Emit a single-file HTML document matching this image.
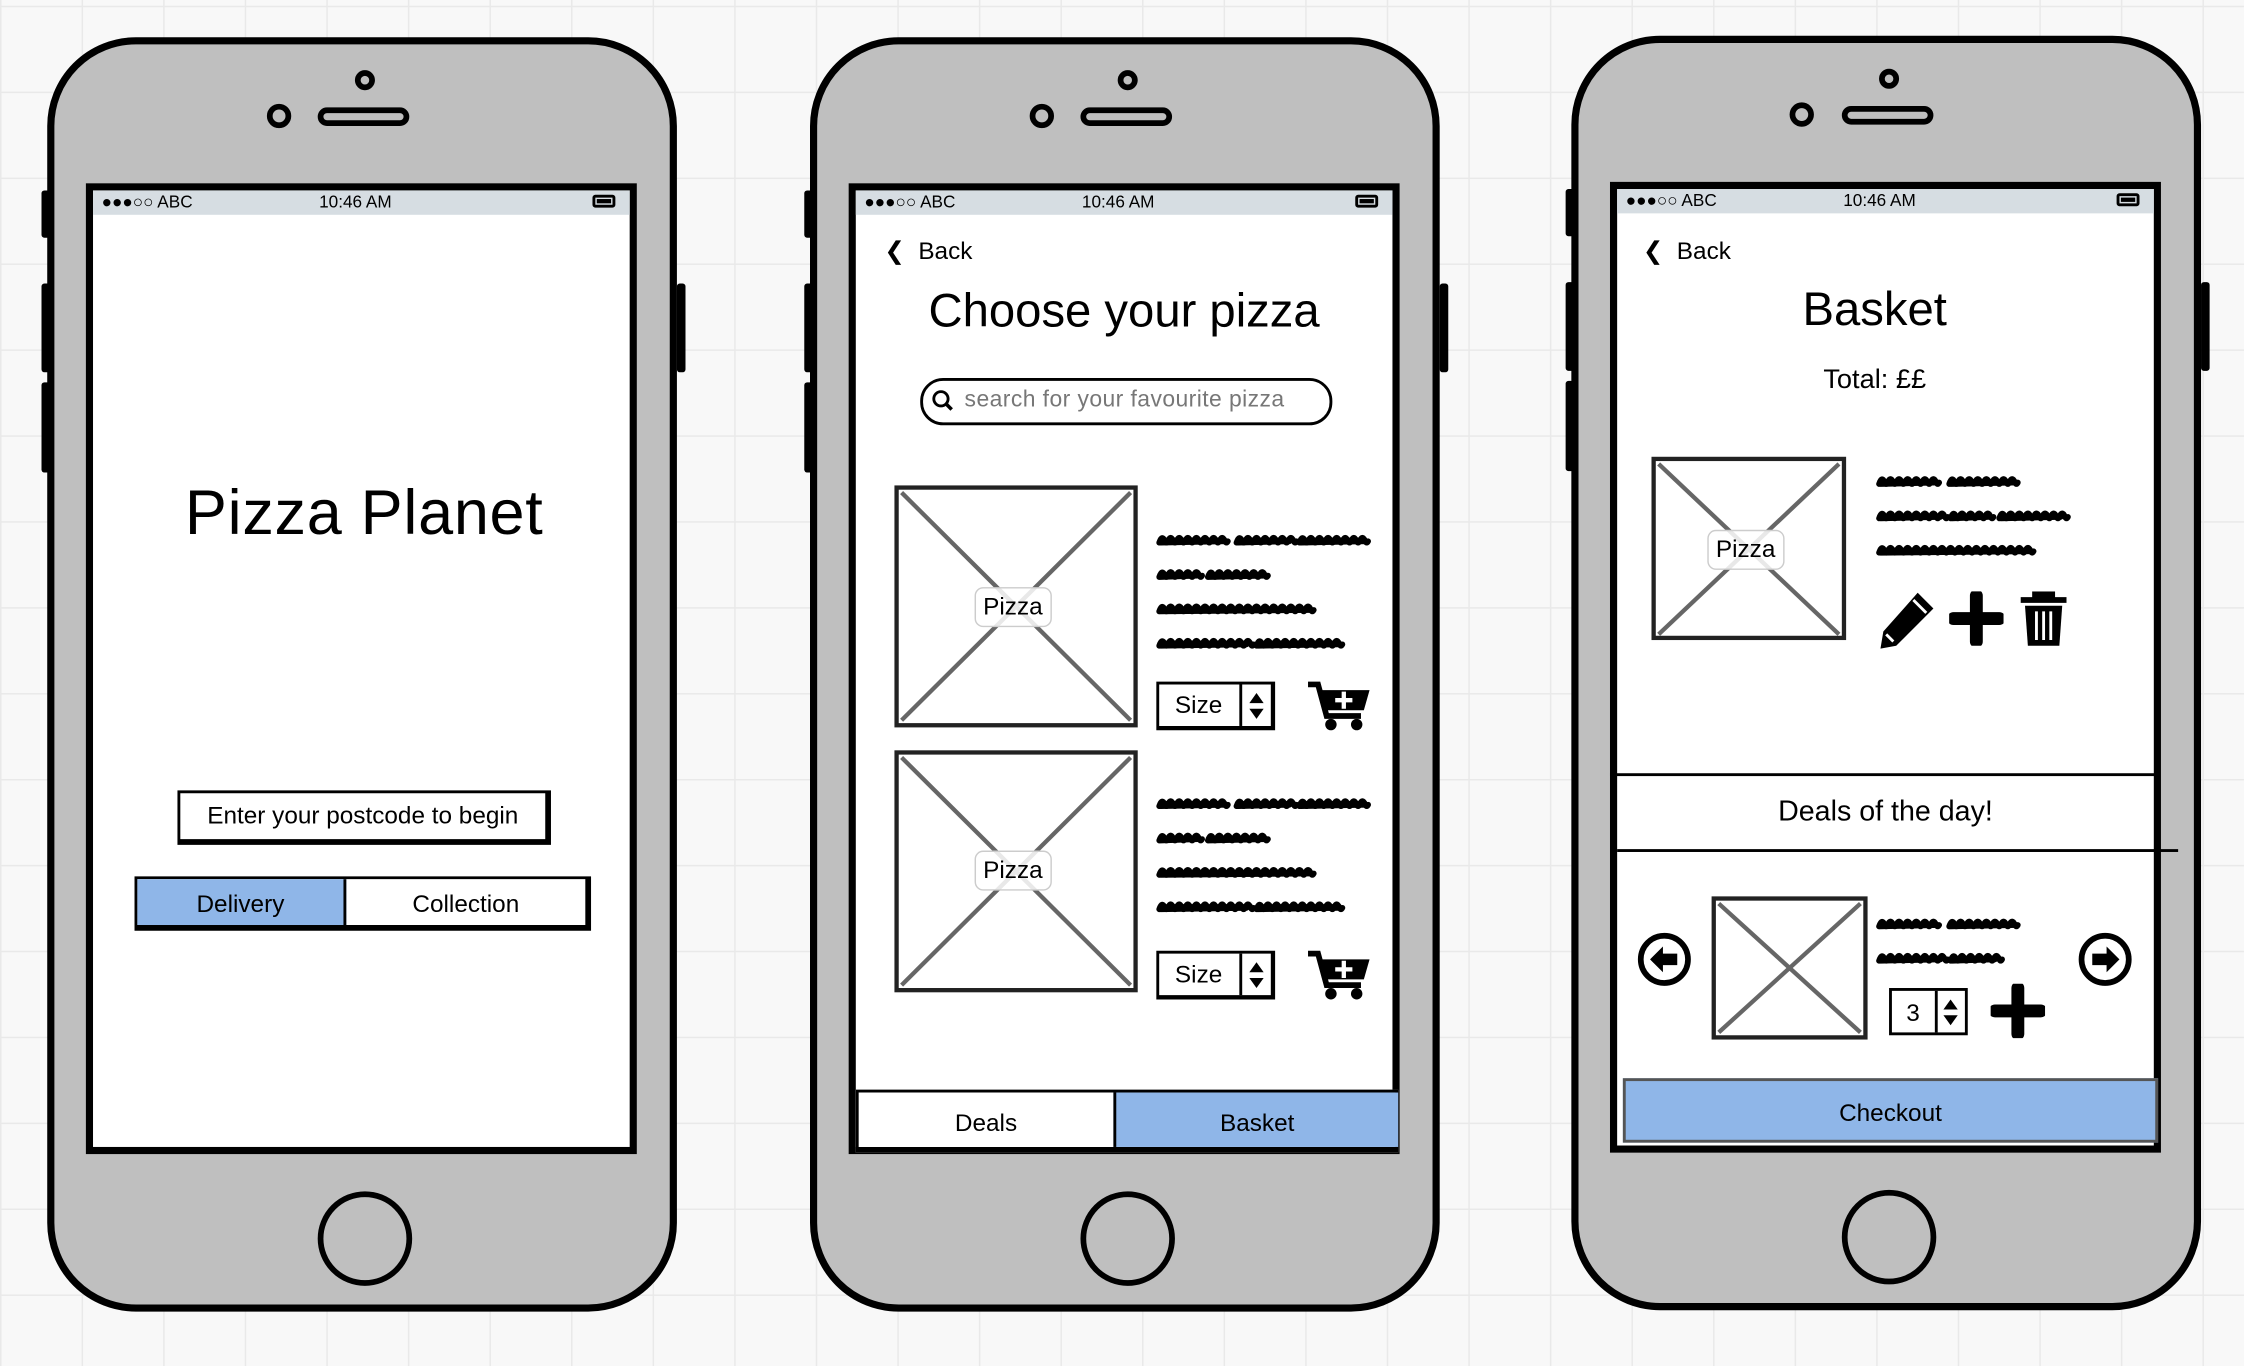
<!DOCTYPE html>
<html><head><meta charset="utf-8">
<style>
html,body{margin:0;padding:0}
body{width:2244px;height:1366px;overflow:hidden;background:#f8f8f8}
#w{position:absolute;left:0;top:0;width:1568px;height:954px;transform:scale(1.4311,1.4319);transform-origin:0 0;
background-color:#f8f8f8;
background-image:linear-gradient(#e9e9e9 1px,transparent 1px),linear-gradient(90deg,#e9e9e9 1px,transparent 1px);
background-size:57px 60px;background-position:0 4px;
font-family:"Liberation Sans",sans-serif;color:#000}
.a{position:absolute}
.phone{position:absolute;width:430px;height:880px;border:5px solid #000;border-radius:62px;background:#bfbfbf}
.scr{position:absolute;left:22px;top:97px;width:375px;height:668px;border:5px solid #000;background:#fff}
.sb{position:absolute;left:0;top:0;width:100%;height:17px;background:#d6dde2;font-size:12px;line-height:17px}
.btn{position:absolute;width:6px;background:#000;border-radius:2px}
.t{position:absolute;white-space:nowrap}
.img{position:absolute;border:3px solid #222;background:#fff}
</style></head><body><div id="w">

<div class="phone" style="left:33px;top:26px"></div>
<div class="phone" style="left:566px;top:26px"></div>
<div class="phone" style="left:1098px;top:25px"></div>

<div class="btn" style="left:29px;top:133px;height:33px"></div>
<div class="btn" style="left:29px;top:198px;height:62px"></div>
<div class="btn" style="left:29px;top:267px;height:63px"></div>
<div class="btn" style="left:473px;top:198px;height:62px"></div>
<div class="btn" style="left:562px;top:133px;height:33px"></div>
<div class="btn" style="left:562px;top:198px;height:62px"></div>
<div class="btn" style="left:562px;top:267px;height:63px"></div>
<div class="btn" style="left:1006px;top:198px;height:62px"></div>
<div class="btn" style="left:1094px;top:132px;height:33px"></div>
<div class="btn" style="left:1094px;top:197px;height:62px"></div>
<div class="btn" style="left:1094px;top:266px;height:63px"></div>
<div class="btn" style="left:1538px;top:197px;height:62px"></div>

<svg class="a" style="left:0;top:0" width="1568" height="954">
<g fill="none" stroke="#000" stroke-width="4">
<circle cx="195" cy="81" r="6.5"/><circle cx="255" cy="56" r="5"/><rect x="224" y="77" width="60" height="9" rx="4.5"/>
<circle cx="255" cy="865" r="31"/>
<circle cx="728" cy="81" r="6.5"/><circle cx="788" cy="56" r="5"/><rect x="757" y="77" width="60" height="9" rx="4.5"/>
<circle cx="788" cy="865" r="31"/>
<circle cx="1259" cy="80" r="6.5"/><circle cx="1320" cy="55" r="5"/><rect x="1289" y="76" width="60" height="9" rx="4.5"/>
<circle cx="1320" cy="864" r="31"/>
</g></svg>

<div class="scr" style="left:60px;top:128px"><div class="sb"><span class="t" style="left:6px">●●●○○ ABC</span><span class="t" style="left:158px">10:46 AM</span><span class="t" style="right:10px;top:3px;width:16px;height:9px;border:2px solid #000;border-radius:2px;box-sizing:border-box"><span style="display:block;margin:1px;height:3px;width:10px;background:#000"></span></span></div></div>
<div class="scr" style="left:593px;top:128px"><div class="sb"><span class="t" style="left:6px">●●●○○ ABC</span><span class="t" style="left:158px">10:46 AM</span><span class="t" style="right:10px;top:3px;width:16px;height:9px;border:2px solid #000;border-radius:2px;box-sizing:border-box"><span style="display:block;margin:1px;height:3px;width:10px;background:#000"></span></span></div></div>
<div class="scr" style="left:1125px;top:127px"><div class="sb"><span class="t" style="left:6px">●●●○○ ABC</span><span class="t" style="left:158px">10:46 AM</span><span class="t" style="right:10px;top:3px;width:16px;height:9px;border:2px solid #000;border-radius:2px;box-sizing:border-box"><span style="display:block;margin:1px;height:3px;width:10px;background:#000"></span></span></div></div>

<!-- SCREEN 1 -->
<div class="t" style="left:62px;width:385px;text-align:center;top:334px;font-size:44px;letter-spacing:0.5px">Pizza Planet</div>
<div class="a" style="left:124px;top:552px;width:255px;height:32px;border:2px solid #000;border-right-width:4px;border-bottom-width:4px;background:#fff;font-size:17px;line-height:32px;text-align:center">Enter your postcode to begin</div>
<div class="a" style="left:94px;top:612px;width:313px;height:32px;border:2px solid #000;border-bottom-width:4px;border-right-width:4px;background:#fff;font-size:17px;line-height:36px">
<div class="a" style="left:0;top:0;width:144px;height:32px;background:#8fb6e8;border-right:2px solid #000;text-align:center">Delivery</div>
<div class="a" style="left:146px;top:0;width:167px;height:32px;text-align:center">Collection</div></div>

<!-- SCREEN 2 -->
<div class="t" style="left:618px;top:166px;font-size:17px">&#10094;&nbsp; Back</div>
<div class="t" style="left:598px;width:375px;text-align:center;top:198px;font-size:33px">Choose your pizza</div>
<div class="a" style="left:643px;top:264px;width:284px;height:29px;border:2px solid #000;border-radius:16px;background:#fff"></div>
<svg class="a" style="left:651px;top:272px" width="16" height="16"><circle cx="6.5" cy="6.5" r="5" stroke="#000" stroke-width="2" fill="none"/><path d="M10 10 L14 14" stroke="#000" stroke-width="2.5"/></svg>
<div class="t" style="left:674px;top:271px;font-size:16px;color:#777;letter-spacing:0.3px">search for your favourite pizza</div>

<svg class="a" style="left:0;top:0" width="1568" height="954">
<g stroke="#666" stroke-width="3">
<line x1="630" y1="344" x2="790" y2="503"/><line x1="790" y1="344" x2="630" y2="503"/>
<line x1="630" y1="529" x2="790" y2="688"/><line x1="790" y1="529" x2="630" y2="688"/>
<line x1="1159" y1="324" x2="1285" y2="443"/><line x1="1285" y1="324" x2="1159" y2="443"/>
<line x1="1201" y1="631" x2="1300" y2="721"/><line x1="1300" y1="631" x2="1201" y2="721"/>
</g></svg>
<div class="img" style="left:625px;top:339px;width:164px;height:163px;background:transparent"></div>
<div class="img" style="left:625px;top:524px;width:164px;height:163px;background:transparent"></div>
<div class="t" style="left:681px;top:410px;height:26px;padding:0 5px;border:1px solid #ccc;border-radius:6px;background:rgba(255,255,255,.85);font-size:17px;line-height:26px">Pizza</div>
<div class="t" style="left:681px;top:594px;height:26px;padding:0 5px;border:1px solid #ccc;border-radius:6px;background:rgba(255,255,255,.85);font-size:17px;line-height:26px">Pizza</div>

<svg id="scrib" class="a" style="left:0;top:0" width="1568" height="954"></svg>

<div class="a" style="left:808px;top:476px;width:78px;height:29px;border:2px solid #000;border-right-width:3px;border-bottom-width:3px;background:#fff;font-size:17px;line-height:29px"><span style="padding-left:11px">Size</span><div class="a" style="left:56px;top:0;width:2px;height:29px;background:#000"></div><svg class="a" style="left:62px;top:5px" width="12" height="20"><path d="M6 1 L11 8 L1 8Z M6 19 L11 12 L1 12Z" fill="#000"/></svg></div>
<div class="a" style="left:808px;top:664px;width:78px;height:29px;border:2px solid #000;border-right-width:3px;border-bottom-width:3px;background:#fff;font-size:17px;line-height:29px"><span style="padding-left:11px">Size</span><div class="a" style="left:56px;top:0;width:2px;height:29px;background:#000"></div><svg class="a" style="left:62px;top:5px" width="12" height="20"><path d="M6 1 L11 8 L1 8Z M6 19 L11 12 L1 12Z" fill="#000"/></svg></div>
<svg class="a" style="left:913px;top:474px" width="46" height="38"><path d="M1 4 H8 L14 26 H38" stroke="#000" stroke-width="4" fill="none"/><path d="M9 8 H44 L40 22 H13Z" fill="#000"/><circle cx="17" cy="32" r="4" fill="#000"/><circle cx="35" cy="32" r="4" fill="#000"/><path d="M26 9 V21 M20 15 H32" stroke="#fff" stroke-width="3"/></svg>
<svg class="a" style="left:913px;top:662px" width="46" height="38"><path d="M1 4 H8 L14 26 H38" stroke="#000" stroke-width="4" fill="none"/><path d="M9 8 H44 L40 22 H13Z" fill="#000"/><circle cx="17" cy="32" r="4" fill="#000"/><circle cx="35" cy="32" r="4" fill="#000"/><path d="M26 9 V21 M20 15 H32" stroke="#fff" stroke-width="3"/></svg>
<div class="a" style="left:598px;top:761px;width:375px;height:38px;border:2px solid #000;border-bottom-width:4px;background:#fff;font-size:17px;line-height:44px">
<div class="a" style="left:0;top:0;width:178px;height:38px;text-align:center">Deals</div>
<div class="a" style="left:178px;top:0;width:197px;height:38px;background:#8fb6e8;border-left:2px solid #000;text-align:center">Basket</div></div>

<!-- SCREEN 3 -->
<div class="t" style="left:1148px;top:166px;font-size:17px">&#10094;&nbsp; Back</div>
<div class="t" style="left:1130px;width:360px;text-align:center;top:197px;font-size:33px">Basket</div>
<div class="t" style="left:1130px;width:360px;text-align:center;top:255px;font-size:19px">Total: ££</div>
<div class="img" style="left:1154px;top:319px;width:130px;height:122px;background:transparent"></div>
<div class="t" style="left:1193px;top:370px;height:26px;padding:0 5px;border:1px solid #ccc;border-radius:6px;background:rgba(255,255,255,.85);font-size:17px;line-height:26px">Pizza</div>
<svg class="a" style="left:1312px;top:412px" width="42" height="42"><path d="M28 2 L39 13 L13 39 L2 41 L4 29Z" fill="#000"/><path d="M25 7 L34 16" stroke="#fff" stroke-width="2"/><path d="M6 31 L11 36" stroke="#fff" stroke-width="2"/></svg>
<svg class="a" style="left:1362px;top:413px" width="38" height="38"><path d="M19 3 V35 M3 19 H35" stroke="#000" stroke-width="9" stroke-linecap="round"/></svg>
<svg class="a" style="left:1410px;top:413px" width="36" height="40"><path d="M2 6 H34 M12 6 V2 H24 V6" stroke="#000" stroke-width="4" fill="none"/><path d="M5 10 H31 L29 38 H7Z" fill="#000"/><path d="M13 14 V34 M18 14 V34 M23 14 V34" stroke="#fff" stroke-width="2"/></svg>
<div class="a" style="left:1125px;top:540px;width:382px;height:2px;background:#000"></div>
<div class="a" style="left:1130px;top:593px;width:392px;height:2px;background:#000"></div>
<div class="t" style="left:1130px;width:375px;text-align:center;top:556px;font-size:20px">Deals of the day!</div>
<svg class="a" style="left:1142px;top:649px" width="42" height="42"><circle cx="21" cy="21" r="16.5" stroke="#000" stroke-width="4" fill="#fff"/><path d="M11 21 L20 12 V17 H30 V25 H20 V30Z" fill="#000"/></svg>
<svg class="a" style="left:1450px;top:649px" width="42" height="42"><circle cx="21" cy="21" r="16.5" stroke="#000" stroke-width="4" fill="#fff"/><path d="M31 21 L22 12 V17 H12 V25 H22 V30Z" fill="#000"/></svg>
<div class="img" style="left:1196px;top:626px;width:103px;height:94px;background:transparent"></div>
<div class="a" style="left:1320px;top:690px;width:51px;height:29px;border:2px solid #000;background:#fff;font-size:17px;line-height:31px"><span style="padding-left:10px">3</span><div class="a" style="left:30px;top:0;width:2px;height:29px;background:#000"></div><svg class="a" style="left:35px;top:5px" width="12" height="20"><path d="M6 1 L11 8 L1 8Z M6 19 L11 12 L1 12Z" fill="#000"/></svg></div>
<svg class="a" style="left:1391px;top:687px" width="38" height="38"><path d="M19 3 V35 M3 19 H35" stroke="#000" stroke-width="9" stroke-linecap="round"/></svg>
<div class="a" style="left:1134px;top:753px;width:374px;height:45px;background:#8fb6e8;border:2px solid #555;box-sizing:border-box;font-size:17px;line-height:45px;text-align:center">Checkout</div>
</div>
<script>
(function(){
var segs=[[810,377,48],[864,377,38],[908,377,48],[810,401,28],[844,401,42],[810,425,106],[810,449,62],[878,449,58],
[810,561,48],[864,561,38],[908,561,48],[810,585,28],[844,585,42],[810,609,106],[810,633,62],[878,633,58],
[1313,336,42],[1362,336,48],[1313,360,44],[1363,360,28],[1397,360,44],[1313,384,108],
[1313,645,42],[1362,645,48],[1313,669,44],[1363,669,32]];
var s='';
segs.forEach(function(g){var x=g[0],y=g[1],w=g[2];var d='M'+x+' '+(y+2);
for(var i=0;i<w;i+=6){var a=x+i;d+=' Q'+(a+2)+' '+(y-4)+' '+(a+4)+' '+(y+1)+' Q'+(a+5)+' '+(y+3)+' '+(a+6)+' '+(y+1);}
s+='<path d="'+d+'" stroke="#000" stroke-width="4" fill="none" stroke-linecap="round" stroke-linejoin="round"/>';
s+='<line x1="'+(x+1)+'" y1="'+(y+2)+'" x2="'+(x+w-1)+'" y2="'+(y+1)+'" stroke="#000" stroke-width="4" stroke-linecap="round"/>';});
document.getElementById('scrib').innerHTML=s;})();
</script>
</body></html>
